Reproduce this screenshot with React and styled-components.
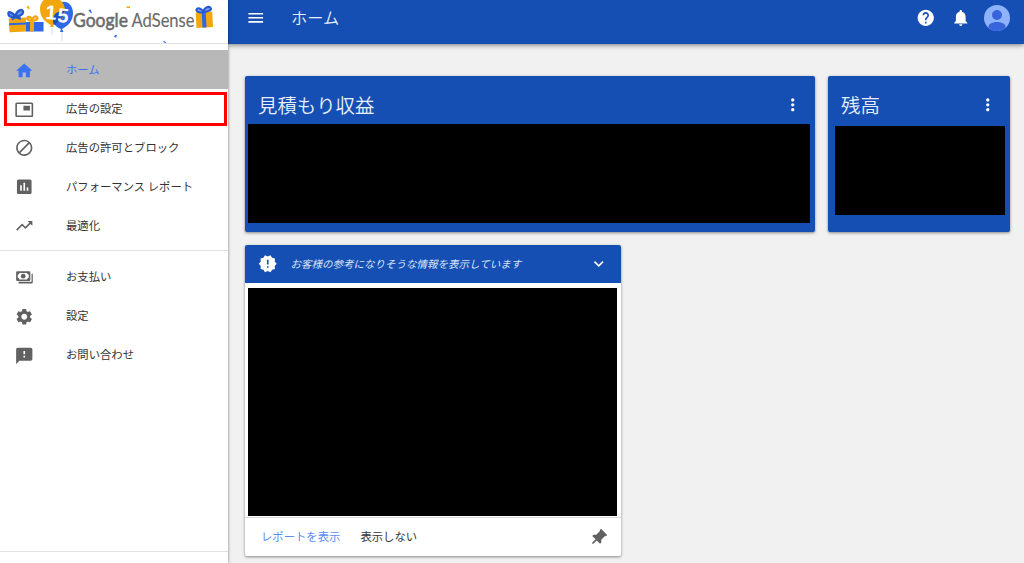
import React from "react";
import styled, { createGlobalStyle } from "styled-components";
import {
  MdAssessment,
  MdBlock,
  MdExpandMore,
  MdFeedback,
  MdHelp,
  MdHome,
  MdMenu,
  MdMoreVert,
  MdNewReleases,
  MdNotifications,
  MdPictureInPicture,
  MdSettings,
  MdTrendingUp,
} from "react-icons/md";

const PaymentsIcon = () => (
  <svg viewBox="0 0 24 24" fill="currentColor">
    <path
      fillRule="evenodd"
      d="M3.500 4H18a1.500 1.500 0 0 1 1.500 1.500v9A1.500 1.500 0 0 1 18 16H3.500A1.500 1.500 0 0 1 2 14.500v-9A1.500 1.500 0 0 1 3.500 4zM6 6a2 2 0 0 1-2 2v4a2 2 0 0 1 2 2h9.500a2 2 0 0 1 2-2V8a2 2 0 0 1-2-2z"
    />
    <circle cx="10.750" cy="10" r="2.900" />
    <path d="M21 7h1.500v10.500a1.500 1.500 0 0 1-1.500 1.500H5v-2h16z" />
  </svg>
);

const mainMenu = [
  { label: "ホーム", icon: <MdHome />, active: true },
  { label: "広告の設定", icon: <MdPictureInPicture />, marked: true },
  { label: "広告の許可とブロック", icon: <MdBlock /> },
  { label: "パフォーマンス レポート", icon: <MdAssessment /> },
  { label: "最適化", icon: <MdTrendingUp /> },
];

const subMenu = [
  { label: "お支払い", icon: <PaymentsIcon /> },
  { label: "設定", icon: <MdSettings /> },
  { label: "お問い合わせ", icon: <MdFeedback /> },
];

const Logo = () => (
  <LogoSvg viewBox="0 0 228 43">
    {/* left presents */}
    <g transform="rotate(-3 16 22)">
      <rect x="9" y="18" width="17" height="14" fill="#f2a60d" />
      <rect x="9" y="23" width="17" height="2" fill="#2d68e8" />
      <path
        d="M16 17c-3-5-8-7-7-3 0 3 4 3 7 3 0-5 5-8 7-6s-2 6-7 6l-4 2M16 17l5 2"
        fill="#7ea0ee"
        stroke="#2659d0"
        strokeWidth="2.400"
      />
    </g>
    <rect x="26" y="22" width="17.500" height="9.500" fill="#2d68e8" />
    <rect x="30" y="22" width="4" height="9.500" fill="#f2a60d" />
    <path
      d="M32 21c-5 0-6-3-4-4s4 1 4 4c0-3 3-6 5-4s-1 4-5 4z"
      fill="#f7cf7c"
      stroke="#f2a60d"
      strokeWidth="2"
    />
    {/* balloons */}
    <path d="M52 27v8M62 32v9" stroke="#c9d3e5" strokeWidth="0.8" />
    <path
      d="M62 2c6-1 11 4 11 11 0 8-5 13-11 16l1.500 3h-3.500l1-3c-5-2-9-6-9-12 0-8 5-14 10-15z"
      fill="#2d68e8"
    />
    <path
      d="M52-3c7 0 13 6 13 13 0 8-6 13-12 15l1 2h-4l1-2C45 22 40 17 40 9c0-7 5-12 12-12z"
      fill="#f2a60d"
    />
    <path d="M65 9c0 7-5 13-11 16-2-4-1-9 2-12z" fill="#1d4fc0" />
    <BalloonText x="45.500" y="19.500" transform="rotate(4 51 12)">
      1
    </BalloonText>
    <BalloonText x="57.500" y="22.500" transform="rotate(7 63 15)">
      5
    </BalloonText>
    <LogoText x="73" y="26.500" $stroke={0.55} textLength="55" lengthAdjust="spacingAndGlyphs">
      Google
    </LogoText>
    <LogoText x="131.500" y="26.500" $stroke={0.15} textLength="63" lengthAdjust="spacingAndGlyphs">
      AdSense
    </LogoText>
    {/* right present */}
    <g transform="rotate(-3 204 18)">
      <rect x="196" y="12" width="16.500" height="15.500" fill="#f2a60d" />
      <rect x="202" y="12" width="4" height="15.500" fill="#2d68e8" />
      <path
        d="M204 12c-5 1-8-1-7-3s5-1 7 3c0-4 5-6 7-4s-2 4-7 4z"
        fill="#7ea0ee"
        stroke="#2659d0"
        strokeWidth="2"
      />
    </g>
    {/* confetti */}
    <path d="M88.500 10l2-.5 1.500 3.500-2-.5zM114 37l1-2h2l-1 2.500zM163 42l1-1 2 1v1z" fill="#2d68e8" />
    <path d="M126 6.500h4v1.500h-3zM26.500 6.500l2-.5 1.500 2.500-2 .5zM151.500 18l2 .5-.5 1.500h-1.500z" fill="#f2a60d" />
  </LogoSvg>
);

const NavItem = ({ item }) => (
  <Item $active={item.active}>
    <ItemIcon>{item.icon}</ItemIcon>
    <ItemLabel>{item.label}</ItemLabel>
    {item.marked && <Marker />}
  </Item>
);

const App = () => {
  return (
    <Page>
      <GlobalStyle />
      <Sidebar>
        <Brand>
          <Logo />
        </Brand>
        <Nav>
          {mainMenu.map((item) => (
            <NavItem key={item.label} item={item} />
          ))}
        </Nav>
        <Nav>
          {subMenu.map((item) => (
            <NavItem key={item.label} item={item} />
          ))}
        </Nav>
        <SidebarFooter />
      </Sidebar>

      <Main>
        <TopBar>
          <MdMenu size={19.500} />
          <PageTitle>ホーム</PageTitle>
          <TopActions>
            <MdHelp size={19.500} />
            <MdNotifications size={19.500} />
          </TopActions>
          <Avatar viewBox="0 0 26 26">
            <clipPath id="avatar">
              <circle cx="13" cy="13" r="13" />
            </clipPath>
            <circle cx="13" cy="13" r="13" fill="#8fb3fb" />
            <g clipPath="url(#avatar)" fill="#3864dc">
              <circle cx="13" cy="10" r="5" />
              <path d="M4.500 26v-4.500c0-3 4.500-4.500 8.500-4.500s8.500 1.500 8.500 4.500V26z" />
            </g>
          </Avatar>
        </TopBar>

        <Content>
          <CardRow>
            <EarningsCard>
              <CardHeader>
                <CardTitle>見積もり収益</CardTitle>
                <MdMoreVert size={19.500} />
              </CardHeader>
              <Redacted $height={99} $margin="0 5px 0 3px" />
            </EarningsCard>
            <BalanceCard>
              <CardHeader>
                <CardTitle>残高</CardTitle>
                <MdMoreVert size={19.500} />
              </CardHeader>
              <Redacted $height={89} $margin="2px 5px 0 7px" />
            </BalanceCard>
          </CardRow>

          <InfoCard>
            <InfoHeader>
              <MdNewReleases size={19.500} />
              <InfoText>お客様の参考になりそうな情報を表示しています</InfoText>
              <MdExpandMore size={19.500} />
            </InfoHeader>
            <Redacted $height={228} $margin="5px 4px 0 3px" />
            <InfoFooter>
              <Action $primary>レポートを表示</Action>
              <Action>表示しない</Action>
              <Pin viewBox="0 0 24 24">
                <path d="M16.500 11.500V4.500h1V2h-11v2.500h1v7L5 14v2.200h6V22l1 1.200 1-1.200v-5.800h6V14z" />
              </Pin>
            </InfoFooter>
          </InfoCard>
        </Content>
      </Main>
    </Page>
  );
};

const GlobalStyle = createGlobalStyle`
  * {
    box-sizing: border-box;
  }

  body {
    margin: 0;
    overflow: hidden;
    font-family: "Noto Sans CJK JP", sans-serif;
  }

  svg {
    display: block;
    flex: none;
  }
`;

const Page = styled.div`
  display: flex;
  height: 563px;
  background: #f1f1f1;
`;

const Sidebar = styled.aside`
  position: relative;
  z-index: 2;
  display: flex;
  flex-direction: column;
  flex: none;
  width: 228px;
  background: #fff;
  box-shadow: 0 0 3px rgba(0, 0, 0, 0.5);
`;

const Brand = styled.div`
  height: 44px;
  border-bottom: 1px solid #e0e0e0;
`;

const LogoSvg = styled.svg`
  width: 228px;
  height: 43px;
`;

const LogoText = styled.text`
  font-family: Lato, sans-serif;
  font-size: 19px;
  fill: #6b6b6b;
  stroke: #6b6b6b;
  stroke-width: ${({ $stroke }) => $stroke}px;
`;

const BalloonText = styled.text`
  font-family: "Liberation Sans", sans-serif;
  font-size: 20px;
  font-weight: 700;
  fill: #fff;
`;

const Nav = styled.ul`
  margin: 0;
  padding: 6px 0;
  list-style: none;

  & + & {
    border-top: 1px solid #e0e0e0;
  }
`;

const ItemIcon = styled.span`
  width: 51.6px;
  padding-top: 2px;

  svg {
    width: 19.5px;
    height: 19.5px;
    transform: translateX(0.5px);
  }
`;

const ItemLabel = styled.span`
  padding-bottom: 1px;
`;

const Item = styled.li`
  position: relative;
  display: flex;
  align-items: center;
  height: 38.9px;
  padding-left: 14.4px;
  color: ${({ $active }) => ($active ? "#3b72f2" : "#333")};
  background: ${({ $active }) => ($active ? "#b8b8b8" : "transparent")};
  font-size: 11.35px;

  ${ItemIcon} {
    color: ${({ $active }) => ($active ? "#3b72f2" : "#616161")};
  }
`;

const Marker = styled.span`
  position: absolute;
  top: 3px;
  left: 4px;
  width: 223px;
  height: 34px;
  border: 3px solid #f00;
`;

const SidebarFooter = styled.div`
  height: 12px;
  margin-top: auto;
  border-top: 1px solid #e0e0e0;
`;

const Main = styled.main`
  flex: 1;
  min-width: 0;
`;

const TopBar = styled.header`
  display: flex;
  align-items: center;
  height: 44px;
  padding: 0 14px 8px 18px;
  color: #fff;
  background: #154fb3;
  box-shadow: 0 1px 5px rgba(0, 0, 0, 0.5);
`;

const PageTitle = styled.h1`
  flex: 1;
  margin: 0 0 0 25.5px;
  padding-bottom: 2px;
  color: #e8eefa;
  font-size: 16.2px;
  font-weight: 350;
`;

const TopActions = styled.div`
  display: flex;
  gap: 15.5px;
  margin-right: 13.5px;
`;

const Avatar = styled.svg`
  width: 26px;
  height: 26px;
`;

const Content = styled.div`
  padding: 32px 14px 0 17px;
`;

const CardRow = styled.div`
  display: flex;
  gap: 13px;
`;

const Card = styled.section`
  border-radius: 2px;
  box-shadow: 0 1px 3px rgba(0, 0, 0, 0.45);
  overflow: hidden;
`;

const EarningsCard = styled(Card)`
  width: 570px;
  height: 156px;
  background: #154fb3;
`;

const BalanceCard = styled(EarningsCard)`
  width: 182px;
`;

const CardHeader = styled.div`
  display: flex;
  align-items: center;
  justify-content: space-between;
  height: 48px;
  padding: 10px 13px 0;
  color: #fff;
`;

const CardTitle = styled.h2`
  margin: 0;
  padding-bottom: 2px;
  color: #e8eefa;
  font-size: 19.4px;
  font-weight: 350;
`;

const Redacted = styled.div`
  height: ${({ $height }) => $height}px;
  margin: ${({ $margin }) => $margin};
  background: #000;
`;

const InfoCard = styled(Card)`
  width: 376px;
  height: 311px;
  margin-top: 13px;
  background: #fff;
`;

const InfoHeader = styled.div`
  display: flex;
  align-items: center;
  height: 38px;
  padding: 0 13px;
  color: #fff;
  background: #154fb3;
`;

const InfoText = styled.em`
  flex: 1;
  margin-left: 13px;
  padding-bottom: 1px;
  color: #dbe5f7;
  font-size: 10.5px;
`;

const InfoFooter = styled.div`
  display: flex;
  align-items: center;
  height: 39px;
  margin-top: 1px;
  padding: 0 13px 0 16px;
  border-top: 1px solid #ddd;
`;

const Action = styled.span`
  margin-right: 20px;
  padding-bottom: 2px;
  color: ${({ $primary }) => ($primary ? "#5a8df5" : "#333")};
  font-size: 11.35px;
`;

const Pin = styled.svg`
  width: 19px;
  height: 19px;
  margin-left: auto;
  fill: #616161;
  transform: rotate(45deg);
`;

export default App;
